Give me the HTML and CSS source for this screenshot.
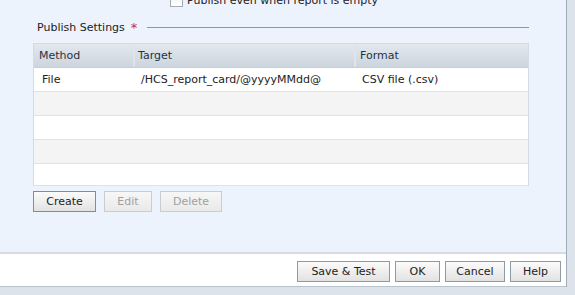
FILE: index.html
```html
<!DOCTYPE html>
<html lang="en">
<head>
    <meta charset="UTF-8">
    <title>Publish Settings</title>
    <link rel="stylesheet" href="styles.css">
</head>
<body>
    <div class="dialog">
        <div class="panel">
            <!-- Checkbox row, scrolled partly out of view -->
            <label class="check-row">
                <span class="checkbox"></span>
                <span>Publish even when report is empty</span>
            </label>

            <div class="section-title">
                <span>Publish Settings</span>
                <span class="required">*</span>
                <span class="rule"></span>
            </div>

            <div class="grid">
                <div class="grid-row grid-head">
                    <div class="cell col-method">Method</div>
                    <div class="cell col-target">Target</div>
                    <div class="cell col-format">Format</div>
                </div>
                <div class="grid-row">
                    <div class="cell col-method">File</div>
                    <div class="cell col-target">/HCS_report_card/@yyyyMMdd@</div>
                    <div class="cell col-format">CSV file (.csv)</div>
                </div>
                <div class="grid-row alt"></div>
                <div class="grid-row"></div>
                <div class="grid-row alt"></div>
                <div class="grid-row last"></div>
            </div>

            <div class="grid-actions">
                <button class="btn btn-main btn-create">Create</button>
                <button class="btn btn-edit" disabled>Edit</button>
                <button class="btn btn-delete" disabled>Delete</button>
            </div>
        </div>

        <div class="footer">
            <button class="btn btn-footer btn-save">Save &amp; Test</button>
            <button class="btn btn-footer btn-ok">OK</button>
            <button class="btn btn-footer btn-cancel">Cancel</button>
            <button class="btn btn-footer btn-help">Help</button>
        </div>
    </div>
</body>
</html>
```

FILE: styles.css
```css
body {
    margin: 0;
    padding: 0;
    background-color: #dde3ea;
    font-family: 'DejaVu Sans', Verdana, sans-serif;
    font-size: 11px;
    color: #222;
    height: 295px;
    overflow: hidden;
}

.dialog {
    width: 566px;
    border-right: 1px solid #9eabb8;
}

.panel {
    display: flow-root;
    background-color: #edf3fc;
    height: 254px;
    padding: 0 37px 0 33px;
    box-sizing: border-box;
    border-bottom: 2px solid #d5dce5;
}

.check-row {
    display: flex;
    align-items: center;
    gap: 4px;
    margin-top: -8px;
    margin-left: 137px;
    height: 16px;
}

.checkbox {
    width: 11px;
    height: 11px;
    border: 1px solid #a4aeb8;
    background: linear-gradient(#f2f2f2, #ffffff);
}

.section-title {
    display: flex;
    align-items: center;
    margin-top: 12px;
    padding-left: 4px;
    height: 14px;
}

.required {
    color: #c0313b;
    margin-left: 6px;
    font-size: 13px;
}

.rule {
    flex: 1;
    height: 1px;
    background-color: #8a96a4;
    margin-left: 10px;
}

.grid {
    margin-top: 9px;
    border: 1px solid #d5dbe2;
    border-bottom-color: #dde2e8;
    background-color: #fff;
}

.grid-row {
    display: flex;
    height: 23px;
    border-bottom: 1px solid #e3e3e3;
    background-color: #fff;
}

.grid-row.alt {
    background-color: #f4f4f4;
}

.grid-row.last {
    border-bottom: none;
    height: 21px;
}

.grid-head {
    background: linear-gradient(#e3e8ee, #ccd4dd);
    border-bottom: 1px solid #c7ced6;
    color: #1f3344;
}

.cell {
    display: flex;
    align-items: center;
    box-sizing: border-box;
    white-space: nowrap;
}

.col-method {
    width: 99px;
    padding-left: 8px;
}

.col-target {
    width: 221px;
    padding-left: 8px;
}

.col-format {
    flex: 1;
    padding-left: 8px;
}

.grid-head .cell {
    padding-left: 5px;
}

.grid-head .col-target {
    padding-left: 3px;
    border-left: 2px solid #dfe4ea;
}

.grid-head .col-format {
    padding-left: 4px;
    border-left: 2px solid #dfe4ea;
}

.grid-actions {
    display: flex;
    gap: 8px;
    margin-top: 5px;
}

.btn {
    font-family: 'DejaVu Sans', Verdana, sans-serif;
    font-size: 11px;
    height: 21px;
    padding: 0;
    color: #222;
    background: linear-gradient(#fbfbfb, #e2e2e2);
    border: 1px solid #c9ccd0;
    border-radius: 0;
    cursor: pointer;
}

.btn-main {
    border-color: #7f8d9b;
}

.btn:disabled {
    color: #a0a0a0;
    background: linear-gradient(#f7f7f7, #e9e9e9);
    cursor: default;
}

.btn-create { width: 63px; }
.btn-edit { width: 48px; }
.btn-delete { width: 62px; }

.footer {
    display: flex;
    justify-content: flex-end;
    gap: 5px;
    background-color: #fff;
    height: 33px;
    padding: 7px 5px 0 0;
    box-sizing: border-box;
    border-bottom: 1px solid #b9c3cd;
}

.btn-footer {
    border-color: #8e9aa6;
}

.btn-save { width: 93px; }
.btn-ok { width: 45px; }
.btn-cancel { width: 60px; }
.btn-help { width: 51px; }
```
